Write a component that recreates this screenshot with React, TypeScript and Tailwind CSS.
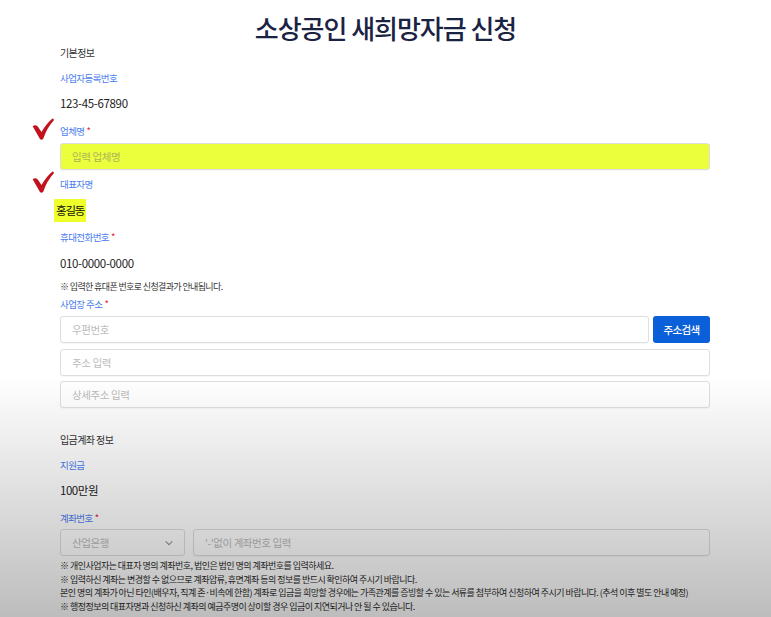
import React from 'react'

const FONT = { fontFamily: '"Noto Sans CJK KR", "Noto Sans", sans-serif' }

function Check() {
    return (
        <svg viewBox="0 0 20 20" className="absolute -left-[28px] -top-[5px] h-[22px] w-[22px]">
            <path
                d="M0.6 7.6 Q3 5.6 5.4 8 L8.6 12.8 Q13 5 18.6 0.4 Q20.4 0.8 19.7 2.3 Q13.8 8.6 10.2 18.8 Q8.6 20.6 7.1 18.9 Z"
                fill="#c3121d"
            />
        </svg>
    )
}

function Label({ text, required, check }: { text: string; required?: boolean; check?: boolean }) {
    return (
        <div className="relative h-4 leading-4 text-[9.5px] tracking-[-0.06em] text-[#4b7df0]">
            {check && <Check />}
            {text}
            {required && <span className="ml-[2px] text-[#e0202a]">*</span>}
        </div>
    )
}

function Field({ placeholder, className = '' }: { placeholder: string; className?: string }) {
    return (
        <input
            readOnly
            placeholder={placeholder}
            className={`h-[27px] rounded-[3px] border border-[#dedede] bg-white px-[11px] text-[10.5px] tracking-[-0.04em] outline-none shadow-[0_1px_1px_rgba(0,0,0,0.04)] placeholder:text-[#bcbcbc] ${className}`}
        />
    )
}

export default function App() {
    return (
        <div className="relative h-[617px] w-full overflow-hidden bg-white text-[#222]" style={FONT}>
            <div className="pt-[11px]">
                <h1 className="h-[34px] text-center text-[26px] font-medium leading-[34px] tracking-[-0.04em] text-[#1b2343]">
                    소상공인 새희망자금 신청
                </h1>
            </div>

            <div className="flex flex-col pl-[60px] pr-[61px]">
                <div className="h-4 text-[10px] leading-4 tracking-[-0.06em] text-[#333]">기본정보</div>

                <div className="mt-[9px]"><Label text="사업자등록번호" /></div>
                <div className="mt-[9px] h-4 text-[11.5px] leading-4 tracking-[-0.03em]">123-45-67890</div>

                <div className="mt-3"><Label text="업체명" required check /></div>
                <Field placeholder="입력 업체명" className="mt-1 w-full !bg-[#ebff3d] placeholder:!text-[#adb45a]" />

                <div className="mt-[6px]"><Label text="대표자명" check /></div>
                <div className="mt-[7px] -ml-[6px] flex h-[23px] w-fit items-center whitespace-nowrap bg-[#eeff2c] px-[2px] text-[11.5px] tracking-[-0.1em] text-[#111]">
                    홍길동
                </div>

                <div className="mt-[7px]"><Label text="휴대전화번호" required /></div>
                <div className="mt-[10px] h-4 text-[11.5px] leading-4 tracking-[-0.03em]">010-0000-0000</div>
                <div className="mt-2 h-4 text-[9px] leading-4 tracking-[-0.07em] text-[#333]">※ 입력한 휴대폰 번호로 신청결과가 안내됩니다.</div>

                <div className="mt-[1px]"><Label text="사업장 주소" required /></div>
                <div className="mt-1 flex gap-[4px]">
                    <Field placeholder="우편번호" className="min-w-0 flex-1" />
                    <button className="h-[27px] w-[57px] rounded-[3px] bg-[#0b5fd8] text-[10.5px] font-medium tracking-[-0.06em] text-white">
                        주소검색
                    </button>
                </div>
                <Field placeholder="주소 입력" className="mt-[6px] w-full" />
                <Field placeholder="상세주소 입력" className="mt-[5px] w-full" />

                <div className="mt-[24px] h-4 text-[10px] leading-4 tracking-[-0.06em] text-[#333]">입금계좌 정보</div>
                <div className="mt-[9px]"><Label text="지원금" /></div>
                <div className="mt-[9px] h-4 text-[11.5px] leading-4 tracking-[-0.04em]">100만원</div>

                <div className="mt-3"><Label text="계좌번호" required /></div>
                <div className="mt-[3px] flex gap-[8px]">
                    <div className="flex h-[27px] w-[125px] items-center justify-between rounded-[3px] border border-[#dedede] bg-white pl-[11px] pr-[10px] text-[10.5px] tracking-[-0.04em] text-[#bcbcbc]">
                        <span>산업은행</span>
                        <svg viewBox="0 0 12 12" className="h-[10px] w-[10px]" fill="none" stroke="#999" strokeWidth="1.4">
                            <path d="M2 4 L6 8 L10 4" />
                        </svg>
                    </div>
                    <Field placeholder="'-'없이 계좌번호 입력" className="min-w-0 flex-1" />
                </div>

                <div className="mt-[3px] flex flex-col text-[9px] leading-[13.7px] tracking-[-0.06em] text-[#2a2a2a]">
                    <div>※ 개인사업자는 대표자 명의 계좌번호, 법인은 법인 명의 계좌번호를 입력하세요.</div>
                    <div>※ 입력하신 계좌는 변경할 수 없으므로 계좌압류, 휴면계좌 등의 정보를 반드시 확인하여 주시기 바랍니다.</div>
                    <div className="whitespace-nowrap">
                        본인 명의 계좌가 아닌 타인(배우자, 직계 존·비속에 한함) 계좌로 입금을 희망할 경우에는 가족관계를 증빙할 수 있는 서류를 첨부하여 신청하여 주시기 바랍니다. (추석 이후 별도 안내 예정)
                    </div>
                    <div>※ 행정정보의 대표자명과 신청하신 계좌의 예금주명이 상이할 경우 입금이 지연되거나 안 될 수 있습니다.</div>
                </div>
            </div>

            {/* video shade at the bottom */}
            <div className="pointer-events-none absolute inset-x-0 bottom-0 h-[240px] bg-linear-to-b from-transparent to-black/[0.26]" />
        </div>
    )
}
